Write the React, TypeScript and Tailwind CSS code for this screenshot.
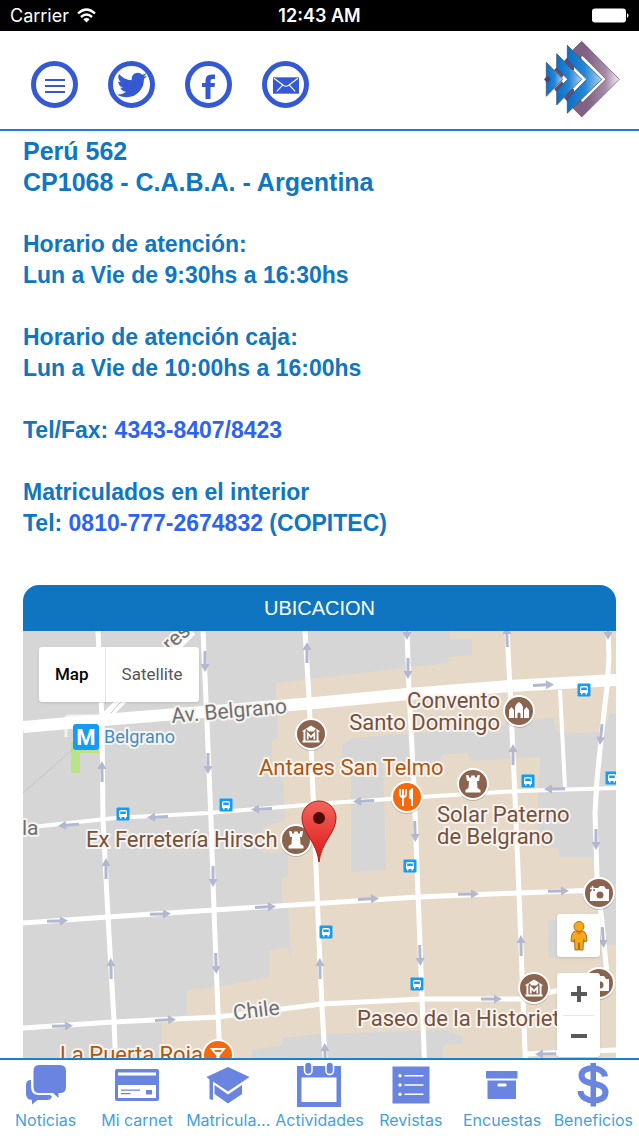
import { useState } from "react";
import type { ReactNode } from "react";
import { FaTwitter } from "react-icons/fa";

type point = { x: number, y: number }
type arrow = point & { angle: number }
type tab = { label: string, icon: ReactNode }

const streets = [
    { d: "M98 631 L102 720 L103 820 L108 917 L114 1020 L116 1075", width: 5 },
    { d: "M203 631 L207 723 L211 820 L214 910 L219 1037 L220 1075", width: 5 },
    { d: "M305 631 L309 697 L313 793 L318 917 L322 1007 L326 1075", width: 5 },
    { d: "M407 631 L409 690 L414 787 L418 893 L422 997 L425 1075", width: 5 },
    { d: "M507 631 L510 687 L515 797 L519 893 L523 1000 L526 1075", width: 5 },
    { d: "M560 690 L565 787", width: 4 },
    { d: "M608 631 L609 657 L607 687 L602 730 L597 780 L595 813 L597 877 L603 933 L608 985", width: 5 },
    { d: "M23 828 L115 818 L208 813 L330 803 L420 797 L520 791 L616 788", width: 4 },
    { d: "M23 923 L108 917 L214 910 L325 903 L418 897 L519 893 L600 890", width: 5 },
    { d: "M23 1028 L113 1022 L218 1017 L322 1004 L422 999 L520 999 L560 990", width: 5 },
    { d: "M526 1054 L616 1050", width: 5 },
    { d: "M23 727 L115 719 L315 703 L408 694 L510 686 L616 680", width: 12 },
]

const arrows: arrow[] = [
    { x: 102, y: 772, angle: -91 },
    { x: 205, y: 661, angle: 90 },
    { x: 208, y: 763, angle: 90 },
    { x: 307, y: 653, angle: -90 },
    { x: 407, y: 629, angle: 90 },
    { x: 408, y: 668, angle: 90 },
    { x: 507, y: 637, angle: -92 },
    { x: 513, y: 755, angle: -90 },
    { x: 608, y: 629, angle: 90 },
    { x: 601, y: 734, angle: 96 },
    { x: 543, y: 685, angle: -3 },
    { x: 555, y: 789, angle: 179 },
    { x: 364, y: 801, angle: 177 },
    { x: 262, y: 809, angle: 177 },
    { x: 158, y: 817, angle: 177 },
    { x: 69, y: 825, angle: 175 },
    { x: 106, y: 869, angle: -90 },
    { x: 213, y: 876, angle: 90 },
    { x: 415, y: 831, angle: 88 },
    { x: 596, y: 839, angle: 90 },
    { x: 57, y: 921, angle: -2 },
    { x: 160, y: 914, angle: -2 },
    { x: 265, y: 907, angle: -3 },
    { x: 368, y: 899, angle: -3 },
    { x: 468, y: 894, angle: -1 },
    { x: 558, y: 891, angle: -1 },
    { x: 111, y: 969, angle: -91 },
    { x: 216, y: 963, angle: 88 },
    { x: 320, y: 969, angle: -91 },
    { x: 420, y: 955, angle: 88 },
    { x: 521, y: 946, angle: -91 },
    { x: 603, y: 937, angle: 86 },
    { x: 62, y: 1026, angle: -2 },
    { x: 165, y: 1020, angle: -3 },
    { x: 491, y: 999, angle: 0 },
    { x: 325, y: 1054, angle: -92 },
    { x: 546, y: 1054, angle: 179 },
]

const busStops: point[] = [
    { x: 123, y: 814 },
    { x: 226, y: 805 },
    { x: 584, y: 690 },
    { x: 528, y: 781 },
    { x: 612, y: 778 },
    { x: 410, y: 866 },
    { x: 326, y: 932 },
    { x: 417, y: 984 },
]

const museum = (
    <>
        <path d="M-9.500 -2.500 L0 -8.500 L9.500 -2.500 Z M-7.500 -3 h2 v10 h-2 Z M5.500 -3 h2 v10 h-2 Z M-8.500 6.500 h17 v2 h-17 Z" fill="white" />
        <path d="M-3.300 5.500 V-.5 L0 3 L3.300 -.5 V5.500" fill="none" stroke="#8a644e" strokeWidth="4" />
        <path d="M-3.300 5.500 V-.5 L0 3 L3.300 -.5 V5.500" fill="none" stroke="white" strokeWidth="1.800" />
    </>
)
const castle = (
    <path d="M-7 -9 L-4 -8.500 V-6.500 H-1.800 V-8.500 H1.800 V-6.500 H4 V-8.500 L7 -9 L6 -3 H4 L4.500 4 L7.500 6 V8.500 H-7.500 V6 L-4.500 4 L-4 -3 H-6 Z" fill="white" />
)
const church = (
    <path d="M-10 7 V-1 l2.500 -3 l2.500 3 V7 Z M-4 7 V-4 Q-3.500 -7 0 -9 Q3.500 -7 4 -4 V7 H1.500 V3 a1.500 1.500 0 0 0 -3 0 V7 Z M5 7 V-1 l2.500 -3 l2.500 3 V7 Z" fill="white" />
)
const fork = (
    <>
        <path d="M-7 -8 V-3 Q-7 0 -4 0 Q-1 0 -1 -3 V-8 M-4 -8 V9" fill="none" stroke="white" strokeWidth="1.800" />
        <path d="M2 -4 Q2 -8 6 -9 V9 H4 V2 H2 Z" fill="white" />
    </>
)
const camera = (
    <>
        <path d="M-8 -2 H-4 V-5 H-1 L1 -7 H5 L7 -4 H10 V8 H-9 V0 Z" fill="white" />
        <circle cx="1" cy="2" r="3.500" fill="#8a644e" />
        <path d="M-6.500 -7 V-2 M-9 -4.500 H-4" stroke="white" strokeWidth="1.500" />
    </>
)
const glass = <path d="M-8 -7 H8 L1.500 1 V7 H4 V9 H-4 V7 H-1.500 V1 Z M-4 -5 L-2.500 -3 H2.500 L4 -5 Z" fill="white" fillRule="evenodd" />

const places = [
    { x: 311, y: 734, color: "#8a644e", icon: museum },
    { x: 519, y: 711, color: "#8a644e", icon: church },
    { x: 473, y: 784, color: "#8a644e", icon: castle },
    { x: 407, y: 797, color: "#f4690f", icon: fork },
    { x: 296, y: 840, color: "#8a644e", icon: castle },
    { x: 599, y: 893, color: "#8a644e", icon: camera },
    { x: 599, y: 983, color: "#8a644e", icon: camera },
    { x: 534, y: 988, color: "#8a644e", icon: museum },
    { x: 218, y: 1055, color: "#f4690f", icon: glass },
]

function StreetMap() {
    return (
        <svg className="absolute inset-0 w-full h-full" viewBox="23 631 593 428" preserveAspectRatio="xMidYMin slice" role="img" aria-label="Mapa">
            <rect x="23" y="631" width="593" height="460" fill="#d6d6d6" />
            <path fill="#e6d9c8" d="M276 683 L320 678 L403 668 L448 663 V657 L472 655 V639 H450 V631 H616 V1091 H162 V1022 L187 1015 V990 L215 987 L269 977 V950 L288 948 L291 958 L288 903 L282 902 V878 L288 877 V852 L263 853 V828 L285 820 L283 777 L272 767 V740 L278 738 Z" />
            <path fill="#d6d6d6" d="M342 745 L352 738 L427 732 L520 723 L553 717 L558 733 L603 732 L610 713 H616 V945 H607 L600 877 L593 857 H560 L558 848 H542 L537 830 L540 757 L470 761 L468 753 L441 755 L440 762 L383 763 L386 870 L351 872 V763 L342 762 Z" />
            <path fill="#d6d6d6" d="M548 921 L560 919 V958 H549 Z M252 1050 L282 1045 V1038 L321 1034 L447 1030 L463 1037 V1044 L443 1045 V1091 H252 Z" />
            <path fill="#b9e384" d="M71 742 H99 V753 H80 V773 H71 Z" />

            <path d="M100 722 L192 631" stroke="white" strokeWidth="9" fill="none" />
            <path d="M23 793 L72 750 L100 725 L185 631" stroke="#c3c3c3" strokeWidth="1" fill="none" />
            <path d="M66 737 V718 Q66 716 70 716 H95" stroke="#f2f2f2" strokeWidth="3" fill="none" />
            {streets.map((street) => (
                <path key={street.d} d={street.d} stroke="white" strokeWidth={street.width} fill="none" strokeLinejoin="round" />
            ))}

            {arrows.map((a, index) => (
                <g key={index} transform={`translate(${a.x} ${a.y}) rotate(${a.angle})`}>
                    <path d="M-10 -1.500 H3 V-4.500 L11 0 L3 4.500 V1.500 H-10 Z" fill="#b3b8d1" />
                </g>
            ))}

            {busStops.map((stop, index) => (
                <g key={index} transform={`translate(${stop.x} ${stop.y})`}>
                    <rect x="-6.500" y="-6.500" width="13" height="13" rx="1" fill="#149bf5" />
                    <path fillRule="evenodd" fill="white" d="M-4 3 V-2 Q-4 -4 -2 -4 H2 Q4 -4 4 -2 V3 H3 V4.500 H1.500 V3 H-1.500 V4.500 H-3 V3 Z M-2.800 -2.500 V0 H2.800 V-2.500 Z" />
                </g>
            ))}

            <g fontFamily="Roboto, sans-serif" fontSize="22" stroke="#f6f4f1" strokeWidth="4" strokeLinejoin="round" paintOrder="stroke">
                <g fill="#6f6f6f">
                    <text transform="translate(172 723) rotate(-5)" fontSize="21">Av. Belgrano</text>
                    <text transform="translate(170 652) rotate(-42)" fontSize="21">res</text>
                    <text x="22" y="835" fontSize="21">la</text>
                    <text transform="translate(234 1020) rotate(-7)" fontSize="21">Chile</text>
                </g>
                <text x="104" y="743" fontSize="18" fill="#3d8fc6">Belgrano</text>
                <g fill="#765039">
                    <text x="500" y="708" textAnchor="end">Convento</text>
                    <text x="500" y="730" textAnchor="end">Santo Domingo</text>
                    <text x="437" y="822">Solar Paterno</text>
                    <text x="437" y="844">de Belgrano</text>
                    <text x="86" y="847">Ex Ferretería Hirsch</text>
                    <text x="357" y="1026">Paseo de la Historiet</text>
                </g>
                <g fill="#b0560f">
                    <text x="259" y="775">Antares San Telmo</text>
                    <text x="60" y="1062">La Puerta Roja</text>
                </g>
            </g>

            <rect x="73" y="724" width="26" height="26" rx="3" fill="#149bf5" />
            <text x="86" y="745" textAnchor="middle" fontFamily="Roboto, sans-serif" fontWeight="700" fontSize="22" fill="white">M</text>

            {places.map((place, index) => (
                <g key={index} transform={`translate(${place.x} ${place.y})`}>
                    <circle r="16" cy="1" fill="#00000030" />
                    <circle r="15" fill={place.color} stroke="white" strokeWidth="2" />
                    {place.icon}
                </g>
            ))}

            {/* marker */}
            <defs>
                <linearGradient id="pin" x1="0" y1="0" x2="0" y2="1">
                    <stop offset="0" stopColor="#f4645c" />
                    <stop offset="1" stopColor="#dd1616" />
                </linearGradient>
            </defs>
            <path d="M319 862 C317 842 302 833 302 818 A17 17 0 0 1 336 818 C336 833 321 842 319 862 Z" fill="url(#pin)" stroke="#a3201d" strokeWidth="1" />
            <circle cx="319" cy="818" r="6" fill="#4d0a09" />
        </svg>
    )
}

function Logo() {
    return (
        <svg className="w-20 h-20" viewBox="0 0 80 80" role="img" aria-label="COPITEC">
            <defs>
                <linearGradient id="mauve" x1="0" y1="0" x2="1" y2="0">
                    <stop offset="0.300" stopColor="#826184" />
                    <stop offset="0.700" stopColor="#a68ba9" />
                    <stop offset="1" stopColor="#f3edf4" />
                </linearGradient>
                <linearGradient id="azul" x1="0" y1="0" x2="1" y2="0">
                    <stop offset="0" stopColor="#0e6fc4" />
                    <stop offset="0.500" stopColor="#2386d6" />
                    <stop offset="1" stopColor="#a9d2f3" />
                </linearGradient>
            </defs>
            <path d="M41.700 1.300 L79.300 39.300 L41.700 77 L4 39.300 Z" fill="white" />
            <path d="M41.700 1.300 L79.300 39.300 L41.700 77 L33 68 L41 60 V62 L43 62 L66 39.300 L43 16 H41 V19 L33 10 Z" fill="url(#mauve)" stroke="#5c5360" strokeWidth=".7" />
            <path d="M24 21 L28 17 L34 24 L34 30 L30 30 Z M24 58 L28 62 L34 55 V49 H30 Z" fill="#6c4a70" />
            <path d="M14 30 L17 27 L24 34 L22 38 Z M14 49 L17 52 L24 45 L22 41 Z M4 39.300 L8 35 V44 Z" fill="#6c4a70" />
            <g fill="url(#azul)" stroke="#35485c" strokeWidth=".7">
                <path d="M27.300 5.300 L61.700 39.300 L27.300 73.300 V58.700 L46.700 39.300 L27.300 20 Z" />
                <path d="M16.700 13.700 L41.700 39.300 L16.700 65 V50.300 L27.700 39.300 L16.700 28.300 Z" />
                <path d="M6.300 22.300 L22.700 39.300 L6.300 56.300 Z" />
            </g>
            <path d="M5 39.300 L8 36 L11 39.300 L8 42.500 Z" fill="#4e4270" />
        </svg>
    )
}

const socials = [
    {
        label: "Menú",
        icon: <svg className="w-5 h-4 mt-[2px]" viewBox="0 0 20 16"><path d="M0 2 H20 M0 8 H20 M0 14 H20" stroke="currentColor" strokeWidth="2" /></svg>,
    },
    { label: "Twitter", icon: <FaTwitter className="w-[30px] h-[30px] shrink-0" /> },
    {
        label: "Facebook",
        icon: (
            <svg className="w-[13px] h-[25px] mt-1" viewBox="0 0 13 25" fill="currentColor">
                <path d="M13 .5 V5 H10.500 Q8.500 5 8.500 7 V9 H13 L12.500 13 H8.500 V25 H3.500 V13 H0 V9 H3.500 V6.500 Q3.500 .5 9.500 .5 Z" />
            </svg>
        ),
    },
    {
        label: "Correo",
        icon: (
            <svg className="w-[26px] h-[17px] mt-[2px]" viewBox="0 0 27 17">
                <rect width="27" height="17" fill="currentColor" />
                <path d="M1 1 L11 8.500 Q13.500 10 16 8.500 L26 1 M4 14.500 L10 8 M23 14.500 L17 8" stroke="white" strokeWidth="1.200" fill="none" />
            </svg>
        ),
    },
]

const tabs: tab[] = [
    {
        label: "Noticias",
        icon: (
            <>
                <path d="M16 2 H37 Q43 2 43 8 V24 Q43 30 37 30 H35.500 V35 L30 30 H16 Q10.500 30 10.500 24 V8 Q10.500 2 16 2 Z" />
                <path d="M8 17 Q3 17 3 22 V31 Q3 36.500 9 37 V41.500 L14.500 37 H24 Q28 37 29 33.500 L27 32 H15 Q8 31 8 24 Z" />
            </>
        ),
    },
    {
        label: "Mi carnet",
        icon: (
            <>
                <path fillRule="evenodd" d="M3 6 H43 Q45 6 45 8 V36 Q45 38 43 38 H3 Q1 38 1 36 V8 Q1 6 3 6 Z M4 9.500 V12.500 H42 V9.500 Z M4 22 V35 H42 V22 Z" />
                <path d="M7 26.500 H26 V27.800 H7 Z M7 30 H16.500 V31.300 H7 Z M32 27 H38 V31.500 H32 Z" />
            </>
        ),
    },
    {
        label: "Matricula...",
        icon: <path d="M23 4 L44.500 14 L23 28.500 L8 18.500 V37 L4.500 36 V16.500 L1.500 14 Z M9.500 22 L23 31.500 L37 22 V31 L23 40.500 L9.500 31 Z" />,
    },
    {
        label: "Actividades",
        icon: (
            <>
                <path fillRule="evenodd" d="M1 3 H45 V44 H1 Z M5.500 14.500 V39 H40.500 V14.500 Z" />
                <rect x="8.500" y="-1" width="7.500" height="12.500" rx="3.750" stroke="white" strokeWidth="1.500" />
                <rect x="30" y="-1" width="7.500" height="12.500" rx="3.750" stroke="white" strokeWidth="1.500" />
            </>
        ),
    },
    {
        label: "Revistas",
        icon: (
            <>
                <rect x="4.500" y="3.500" width="37" height="37" />
                <path d="M16.500 12.700 H35.500 M16.500 22 H35.500 M16.500 31.300 H35.500" stroke="white" strokeWidth="1.500" />
                <g fill="white">
                    <circle cx="12" cy="12.700" r="1.700" />
                    <circle cx="12" cy="22" r="1.700" />
                    <circle cx="12" cy="31.300" r="1.700" />
                </g>
            </>
        ),
    },
    {
        label: "Encuestas",
        icon: (
            <>
                <path d="M7 8 H38.500 V15.500 H7 Z M8.500 17.500 H37 V36 H8.500 Z" />
                <rect x="18.500" y="20.500" width="9" height="3" rx="1" fill="white" />
            </>
        ),
    },
    {
        label: "Beneficios",
        icon: (
            <>
                <path d="M35 13.500 C34 3 11.500 2.500 11.500 12.500 C11.500 23.500 35.500 17.500 35.500 29.500 C35.500 40.500 11 40.500 10.500 28" fill="none" stroke="currentColor" strokeWidth="6" />
                <rect x="20.500" y="0" width="5.500" height="43.500" />
            </>
        ),
    },
]

export default function App() {
    const [mapType, setMapType] = useState("Map")

    return (
        <div className="h-screen flex flex-col bg-white overflow-hidden">
            <div className="h-[31px] shrink-0 grid grid-cols-3 items-center bg-black text-white px-[10px] text-lg font-['Inter',sans-serif]">
                <div className="flex items-center gap-2">
                    <span>Carrier</span>
                    <svg className="w-[19px] h-[15px]" viewBox="0 0 19 15" fill="none" stroke="white" strokeWidth="2.400">
                        <path d="M1 5.500 Q9.500 -2.500 18 5.500" />
                        <path d="M4 9 Q9.500 4 15 9" />
                        <path d="M6.300 11.300 Q9.500 8.500 12.700 11.300 L9.500 14.500 Z" fill="white" stroke="none" />
                    </svg>
                </div>
                <span className="text-center font-semibold whitespace-nowrap">12:43 AM</span>
                <svg className="w-[37px] h-[15px] justify-self-end" viewBox="0 0 37 15" fill="white">
                    <rect x="0" y="0.500" width="34" height="14" rx="3" />
                    <path d="M35 5 Q38 7.500 35 10 Z" />
                </svg>
            </div>

            <header className="h-[100px] shrink-0 flex items-end justify-between pl-[31px] pr-[19px] border-b-2 border-[#1b80cb]">
                <nav className="flex gap-[30px] pb-[21px]">
                    {socials.map((social) => (
                        <button
                            key={social.label} aria-label={social.label}
                            className="w-[47px] h-[47px] rounded-full border-5 border-[#3559d3] text-[#3559d3] flex items-center justify-center"
                        >
                            {social.icon}
                        </button>
                    ))}
                </nav>
                <div className="pb-[9px]">
                    <Logo />
                </div>
            </header>

            <main className="flex-1 min-h-0 flex flex-col px-[23px] pt-[5px] overflow-hidden font-['Liberation_Sans',Arial,sans-serif]">
                <div className="flex flex-col gap-[31px] font-bold text-[23px] leading-[31px] text-[#0f76c2]">
                    <p className="text-[25px] leading-[31px]">Perú 562<br />CP1068 - C.A.B.A. - Argentina</p>
                    <p>Horario de atención:<br />Lun a Vie de 9:30hs a 16:30hs</p>
                    <p>Horario de atención caja:<br />Lun a Vie de 10:00hs a 16:00hs</p>
                    <p>Tel/Fax: <a href="tel:43438407" className="text-[#2e63ee]">4343-8407/8423</a></p>
                    <p>
                        Matriculados en el interior<br />
                        Tel: <a href="tel:08107772674832" className="text-[#2e63ee]">0810-777-2674832</a> (COPITEC)
                    </p>
                </div>

                <section className="flex-1 flex flex-col mt-[46px] rounded-t-2xl overflow-hidden">
                    <h2 className="h-[46px] shrink-0 flex items-center justify-center bg-[#0f75c0] text-white text-xl">UBICACION</h2>
                    <div className="relative flex-1 min-h-[300px] font-['Roboto',sans-serif]">
                        <StreetMap />
                        <div className="absolute top-4 left-4 h-[55px] flex bg-white rounded-[3px] shadow text-[17px]">
                            {["Map", "Satellite"].map((type) => (
                                <button
                                    key={type}
                                    className={type === mapType ? "px-4 font-medium text-black" : "px-4 text-[#565656] border-l border-gray-200"}
                                    onClick={() => setMapType(type)}
                                >
                                    {type}
                                </button>
                            ))}
                        </div>
                        <div className="absolute right-4 bottom-px w-[43px] flex flex-col gap-4">
                            <button aria-label="Street View" className="h-[43px] bg-white rounded-[3px] shadow flex items-center justify-center">
                                <svg className="w-[18px] h-[30px]" viewBox="0 0 18 30" fill="#f5a81c" stroke="#a2741c" strokeWidth="1">
                                    <path d="M5 10 H13 Q16 11 16.500 15 L17 20 L14.500 21 L13.500 18 L13 29 H9.500 V22 H8.500 V29 H5 L4.500 18 L3.500 21 L1 20 L1.500 15 Q2 11 5 10 Z" />
                                    <circle cx="9" cy="5.500" r="5" />
                                    <path d="M6 11 H12 L9 14 Z" fill="#e57d1b" stroke="none" />
                                </svg>
                            </button>
                            <div className="h-[84px] bg-white rounded-[3px] shadow flex flex-col px-[6px] divide-y divide-gray-200">
                                <button aria-label="Acercar" className="flex-1 flex items-center justify-center">
                                    <svg className="w-4 h-4" viewBox="0 0 16 16"><path d="M0 8 H16 M8 0 V16" stroke="#595959" strokeWidth="4" /></svg>
                                </button>
                                <button aria-label="Alejar" className="flex-1 flex items-center justify-center">
                                    <svg className="w-4 h-4" viewBox="0 0 16 16"><path d="M0 8 H16" stroke="#595959" strokeWidth="4" /></svg>
                                </button>
                            </div>
                        </div>
                    </div>
                </section>
            </main>

            <nav className="h-[78px] shrink-0 grid grid-cols-7 border-t-2 border-[#1b80cb] bg-white pt-[3px] font-['Inter',sans-serif]">
                {tabs.map((item) => (
                    <button key={item.label} className="min-w-0 flex flex-col items-center gap-[3px]">
                        <svg className="w-[46px] h-11 shrink-0 overflow-visible text-[#6985e0]" viewBox="0 0 46 44" fill="currentColor">
                            {item.icon}
                        </svg>
                        <span className="text-base leading-5 text-[#44a1db] whitespace-nowrap">{item.label}</span>
                    </button>
                ))}
            </nav>
        </div>
    );
}
